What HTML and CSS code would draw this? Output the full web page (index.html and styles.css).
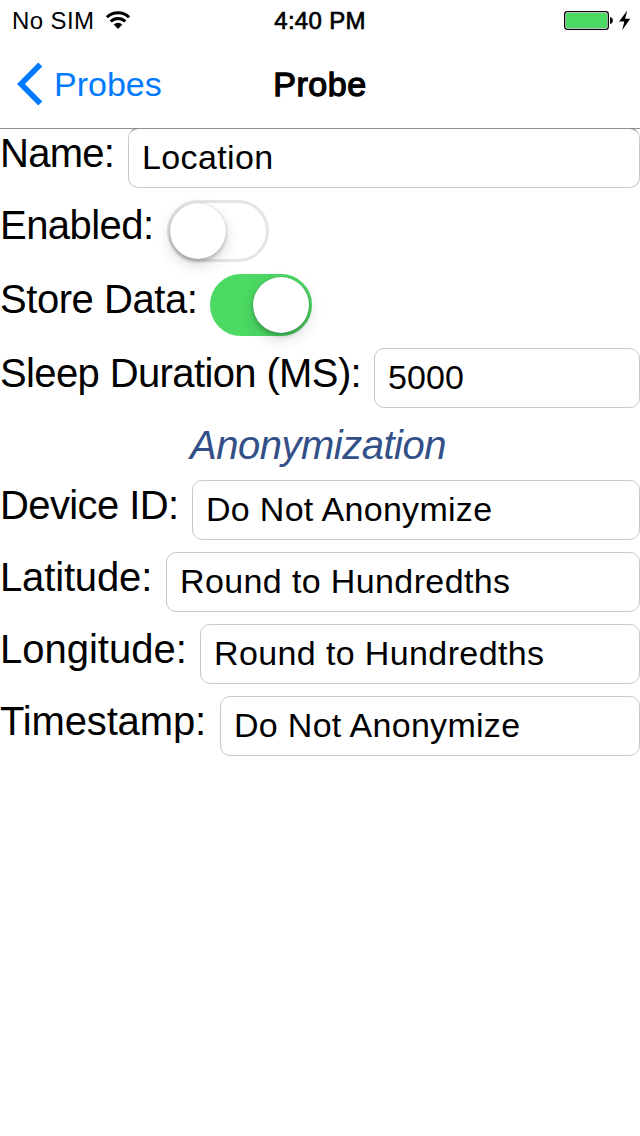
FILE: index.html
```html
<!DOCTYPE html>
<html lang="en">
<head>
<meta charset="utf-8">
<title>Probe</title>
<link rel="stylesheet" href="styles.css">
</head>
<body>
<header class="status">
  <div class="carrier"><span>No SIM</span>
    <svg class="wifi" width="26" height="20" viewBox="0 0 26 20"><g fill="none" stroke="#000" stroke-width="3"><path d="M1.9 7.2A15.8 15.8 0 0 1 24.1 7.2"/><path d="M5.7 11.4A10.4 10.4 0 0 1 20.3 11.4"/></g><path d="M8.7 14.6A6.2 6.2 0 0 1 17.3 14.6L13 19Z"/></svg>
  </div>
  <div class="clock">4:40 PM</div>
  <div class="power">
    <svg width="68" height="24" viewBox="0 0 68 24"><rect x=".7" y="2.7" width="43.6" height="17.6" rx="2.6" fill="#fff" stroke="#000" stroke-width="1.3"/><rect x="2" y="4" width="41" height="15" rx="1.2" fill="#4cd964"/><path d="M46 8C49.8 8.5 49.8 14.5 46 15Z"/><path d="M63.3 1.5L55 12.4H60.3L58.2 21.2L66.2 9.8H61.1Z"/></svg>
  </div>
</header>
<nav class="nav">
  <div class="back">
    <svg width="28" height="44" viewBox="0 0 28 44"><path d="M24.3 2.5L5 22L24.3 41.5" fill="none" stroke="#007aff" stroke-width="5.6"/></svg>
    <span>Probes</span>
  </div>
  <h1 class="title">Probe</h1>
</nav>
<main class="form">
  <div class="row"><span class="label name">Name:</span><div class="field">Location</div></div>
  <div class="row switch-row"><span class="label enabled">Enabled:</span><div class="switch"><i class="knob"></i></div></div>
  <div class="row switch-row"><span class="label store">Store Data:</span><div class="switch on"><i class="knob"></i></div></div>
  <div class="row"><span class="label sleep">Sleep Duration (MS):</span><div class="field number">5000</div></div>
  <h2 class="section">Anonymization</h2>
  <div class="row"><span class="label device">Device ID:</span><div class="field choice">Do Not Anonymize</div></div>
  <div class="row"><span class="label latitude">Latitude:</span><div class="field">Round to Hundredths</div></div>
  <div class="row"><span class="label longitude">Longitude:</span><div class="field">Round to Hundredths</div></div>
  <div class="row"><span class="label timestamp">Timestamp:</span><div class="field choice">Do Not Anonymize</div></div>
</main>
</body>
</html>
```
FILE: styles.css
```css
* { box-sizing: border-box; }
body { margin: 0; width: 640px; min-height: 1136px; background: #fff; color: #000; font-family: "Liberation Sans", Arial, sans-serif; overflow: hidden; }
svg { display: block; }
.status { height: 40px; display: grid; grid-template-columns: 1fr auto 1fr; align-items: center; padding: 2px 8px 0 12px; font-size: 24px; line-height: 38px; }
.carrier { display: flex; align-items: center; gap: 11px; letter-spacing: .4px; }
.wifi { margin-top: -2px; }
.clock { -webkit-text-stroke: .7px #000; letter-spacing: .3px; margin-left: -4px; }
.power { justify-self: end; }
.nav { height: 89px; display: grid; grid-template-columns: 1fr auto 1fr; align-items: center; border-bottom: 1px solid #8f8f8f; font-size: 34px; line-height: 40px; }
.back { display: flex; align-items: center; gap: 10px; padding-left: 16px; color: #007aff; letter-spacing: 0; }
.title { margin: 0; font-size: 34px; font-weight: 400; -webkit-text-stroke: 1.3px #000; letter-spacing: .6px; }
.form { display: flex; flex-direction: column; gap: 12px; margin-top: -1px; }
.row { display: flex; gap: 12px; height: 60px; }
.switch-row { height: 62px; }
.label { flex: none; font-size: 40px; line-height: 50px; white-space: nowrap; }
.name { width: 116px; letter-spacing: -.75px; }
.enabled { width: 155px; letter-spacing: -.55px; }
.store { width: 198px; letter-spacing: -.45px; }
.sleep { width: 362px; letter-spacing: -.62px; }
.device { width: 180px; letter-spacing: -.6px; }
.latitude { width: 154px; letter-spacing: -.15px; }
.longitude { width: 188px; letter-spacing: 0; }
.timestamp { width: 208px; letter-spacing: -.15px; }
.field { flex: 1; border: 1px solid #c8c8c8; border-radius: 10px; padding-left: 13px; font-size: 34px; line-height: 57px; letter-spacing: .38px; white-space: nowrap; }
.choice { letter-spacing: .3px; }
.number { letter-spacing: .1px; }
.row:first-child .field { border-top-color: #8f8f8f; }
.switch { width: 102px; height: 62px; border-radius: 31px; border: 3px solid #e5e5e5; display: flex; }
.knob { width: 56px; height: 56px; border-radius: 50%; background: #fff; box-shadow: 0 0 1px rgba(0,0,0,.3), 0 3px 4px rgba(0,0,0,.2), 0 6px 16px rgba(0,0,0,.14); }
.on { background: #4cd964; border-color: #4cd964; justify-content: flex-end; }
.section { margin: 0; height: 48px; font-size: 40px; line-height: 50px; font-weight: 400; font-style: italic; text-align: center; color: #325087; letter-spacing: -.5px; padding-right: 4px; }
```
